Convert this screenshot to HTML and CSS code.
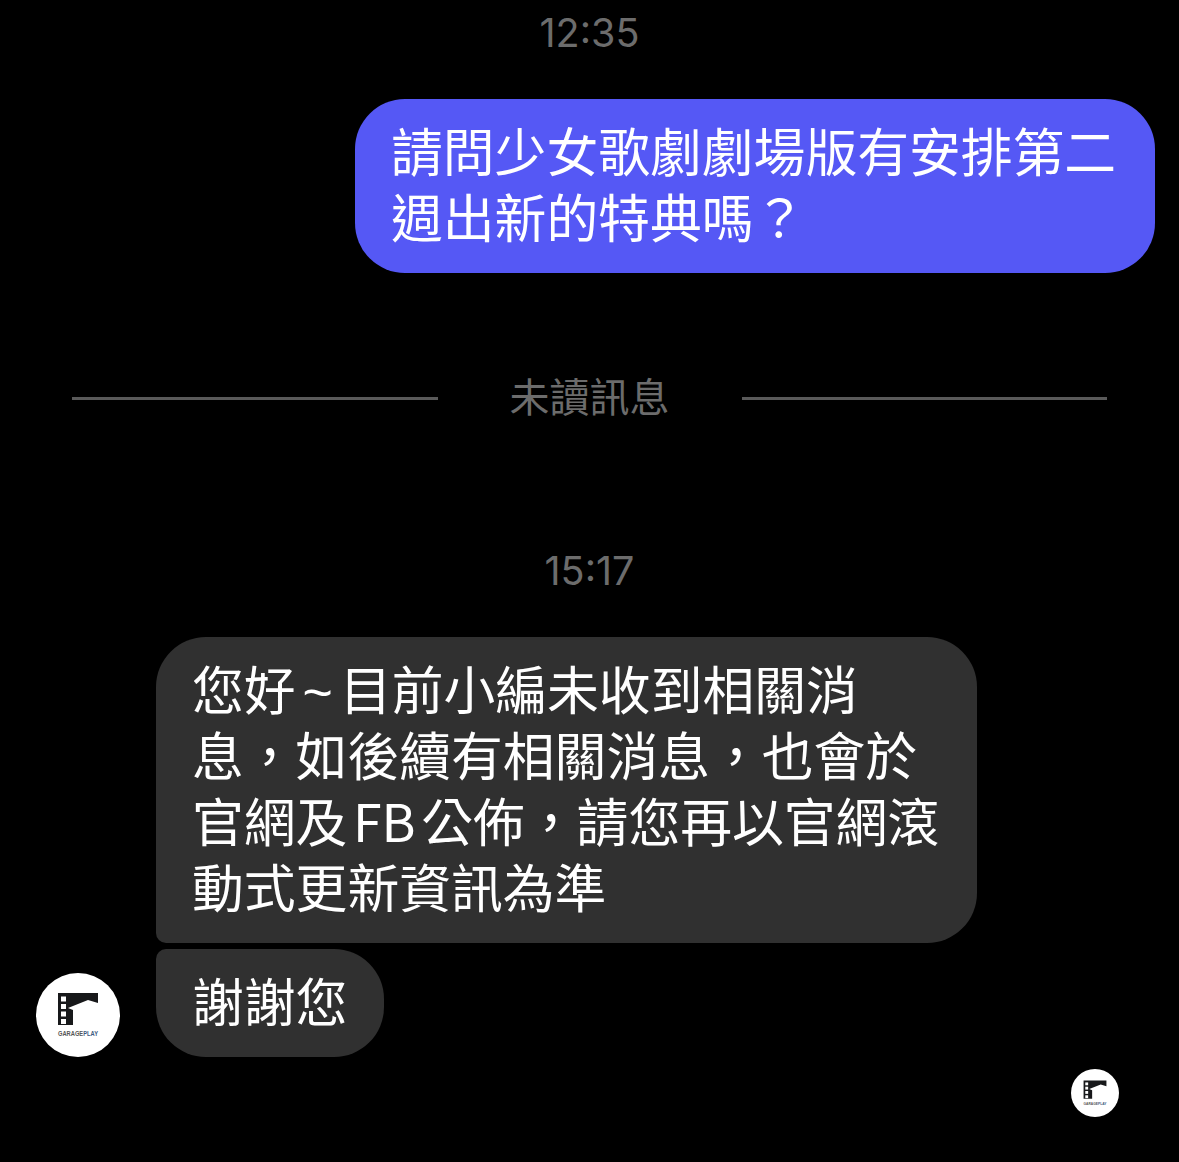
FILE: index.html
```html
<!DOCTYPE html>
<html lang="zh-Hant">
<head>
<meta charset="UTF-8">
<title>Messages</title>
<link rel="stylesheet" href="styles.css">
</head>
<body>
    <div class="thread">
        <p class="time time-first">12:35</p>

        <div class="row row-out">
            <div class="bubble bubble-out">請問少女歌劇劇場版有安排第二<br>週出新的特典嗎？</div>
        </div>

        <div class="unread">
            <span class="unread-line"></span>
            <span class="unread-text">未讀訊息</span>
            <span class="unread-line"></span>
        </div>

        <p class="time time-second">15:17</p>

        <div class="group">
            <div class="avatar-col">
                <svg class="logo logo-big" viewBox="0 0 84 84">
                    <use href="#garage"></use>
                </svg>
            </div>
            <div class="bubbles">
                <div class="bubble bubble-in bubble-top">您好<span class="tilde">~</span>目前小編未收到相關消<br>息，如後續有相關消息，也會於<br><span class="tight">官網及 FB 公佈</span>，請您再以官網滾<br>動式更新資訊為準</div>
                <div class="bubble bubble-in bubble-bottom">謝謝您</div>
            </div>
        </div>

        <div class="seen">
            <svg class="logo logo-small" viewBox="0 0 84 84">
                <use href="#garage"></use>
            </svg>
        </div>
    </div>

    <svg class="defs" width="0" height="0">
        <defs>
            <g id="garage">
                <circle cx="42" cy="42" r="42" fill="#fff"/>
                <path d="M22 20H62V30L52 27L32 35L37 37V52H22Z" fill="#17181a"/>
                <rect x="25" y="23.5" width="5" height="5" fill="#fff"/>
                <rect x="25" y="31" width="5" height="5" fill="#fff"/>
                <rect x="25" y="38.5" width="5" height="5" fill="#fff"/>
                <rect x="25" y="46" width="5" height="5" fill="#fff"/>
                <text x="22" y="63" class="logo-text" textLength="40" lengthAdjust="spacingAndGlyphs">GARAGE<tspan class="logo-play">PLAY</tspan></text>
            </g>
        </defs>
    </svg>
</body>
</html>
```

FILE: styles.css
```css
body {
    margin: 0;
    background-color: #000;
    font-family: "Noto Sans CJK TC", "Noto Sans", sans-serif;
}

.thread {
    height: 1162px;
    overflow: hidden;
}

.time {
    margin: 0;
    text-align: center;
    font-family: Inter, "Liberation Sans", sans-serif;
    font-size: 39.5px;
    line-height: 44px;
    color: #6c6c6c;
}

.time-first {
    padding-top: 11px;
}

.time-second {
    margin-top: 122px;
}

.row-out {
    display: flex;
    justify-content: flex-end;
    margin-top: 44px;
    padding-right: 24px;
}

.bubble {
    box-sizing: border-box;
    padding: 18px 36px 24px;
    font-size: 51.8px;
    line-height: 66px;
    color: #fff;
    border-radius: 50px;
    white-space: nowrap;
}

.bubble-out {
    width: 800px;
    background-color: #5558f5;
}

.bubble-in {
    background-color: #303030;
}

.bubble-top {
    width: 821px;
    border-bottom-left-radius: 10px;
}

.bubble-bottom {
    width: 228px;
    margin-top: 6px;
    border-top-left-radius: 10px;
}

.tilde {
    margin: 0 7px;
    font-family: "Liberation Sans", sans-serif;
    font-weight: 400;
    line-height: 1px;
}

.tight {
    word-spacing: -6px;
}

.unread {
    display: flex;
    align-items: center;
    margin-top: 96px;
    padding: 0 72px;
    height: 58px;
}

.unread-line {
    flex: 1;
    height: 3px;
    background-color: #5a5a5a;
}

.unread-text {
    width: 304px;
    padding-bottom: 6px;
    text-align: center;
    font-size: 40px;
    line-height: 52px;
    color: #6c6c6c;
}

.group {
    display: flex;
    align-items: flex-end;
    margin-top: 44px;
    padding-left: 36px;
}

.avatar-col {
    width: 120px;
    display: flex;
}

.bubbles {
    display: flex;
    flex-direction: column;
}

.logo {
    display: block;
}

.logo-big {
    width: 84px;
    height: 84px;
}

.logo-small {
    width: 48px;
    height: 48px;
}

.logo-text {
    font-family: "Liberation Sans", sans-serif;
    font-size: 7.5px;
    font-weight: 700;
    fill: #555;
}

.logo-play {
    fill: #3d5a80;
}

.seen {
    display: flex;
    justify-content: flex-end;
    margin-top: 12px;
    padding-right: 60px;
}

.defs {
    position: absolute;
}
```
